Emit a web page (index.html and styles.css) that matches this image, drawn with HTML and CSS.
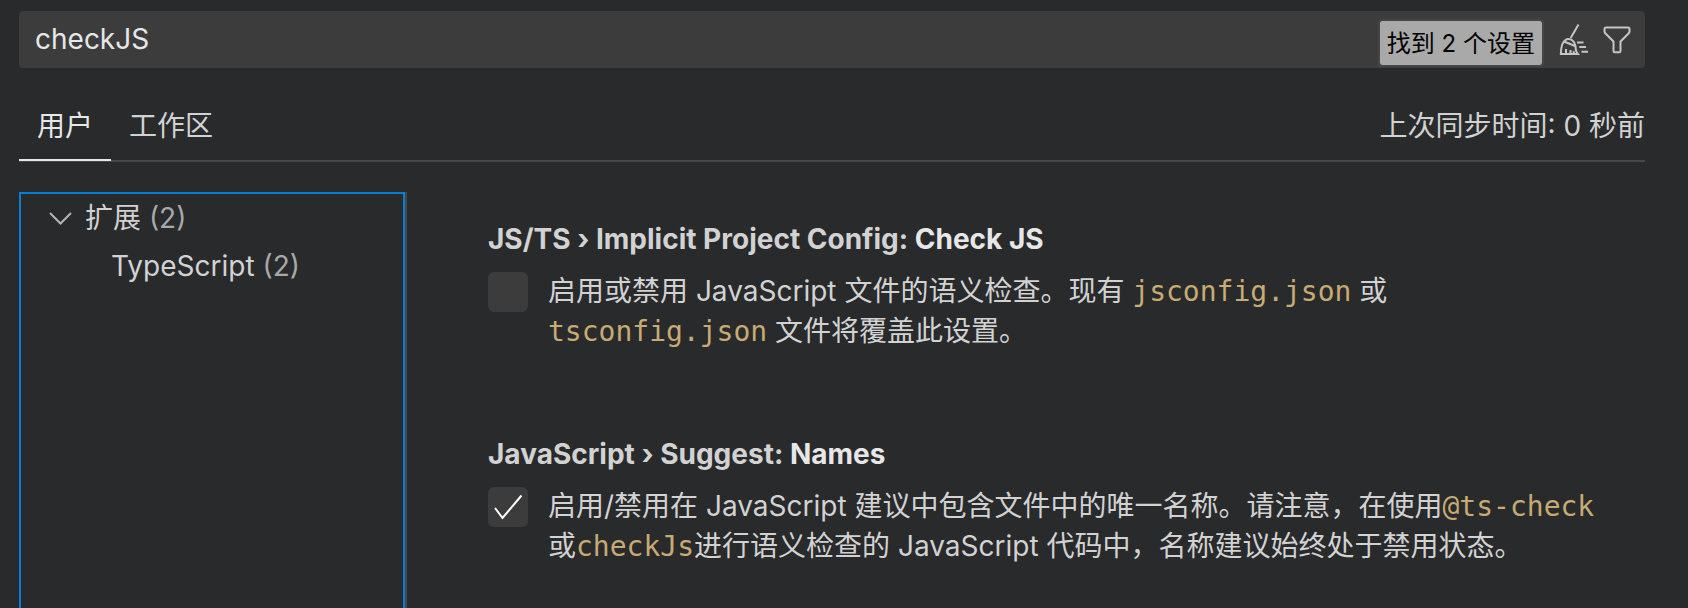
FILE: index.html
```html
<!DOCTYPE html>
<html lang="zh-CN">
<head>
<meta charset="utf-8">
<title>设置</title>
<link rel="stylesheet" href="styles.css">
</head>
<body>
<div class="settings">
  <div class="search">
    <input class="search-input" type="text" value="checkJS" aria-label="搜索设置">
    <span class="badge">找到 2 个设置</span>
    <button class="icon-button" type="button" aria-label="清除">
      <svg width="32" height="32" viewBox="0 0 32 32" fill="none" stroke="currentColor" stroke-width="2">
        <path d="M19.5 .5 11.7 14M1.8 30C2 22 3.500 17 7.500 15.300 12 14 16 17.500 16.500 22 16.500 26 17 28 18.800 30ZM5 17.500 16 22M7 30v-5M11.500 30v-4M15 30l-.5-3M18 18.500h6.500M20.300 23H27M22.500 27.700H29"/>
      </svg>
    </button>
    <button class="icon-button" type="button" aria-label="筛选">
      <svg width="32" height="32" viewBox="0 0 32 32" fill="none" stroke="currentColor" stroke-width="2" stroke-linejoin="round">
        <path d="M4 3.500H26Q27.500 3.500 27.500 5V7.500Q27.500 8.500 26.500 9.500L18.500 17.500V27Q18.500 28.300 17.200 28.300H12.800Q11.500 28.300 11.500 27V17.500L3.500 9.500Q2.500 8.500 2.500 7.500V5Q2.500 3.500 4 3.500Z"/>
      </svg>
    </button>
  </div>

  <div class="tabs">
    <button class="tab tab-active" type="button">用户</button>
    <button class="tab" type="button">工作区</button>
    <span class="sync">上次同步时间: 0 秒前</span>
  </div>

  <div class="body">
    <nav class="toc">
      <div class="toc-row">
        <svg class="chevron" width="24" height="24" viewBox="0 0 24 24" fill="none" stroke="currentColor" stroke-width="2"><path d="M2 7 12.500 17.500 23 7"/></svg>
        <span>扩展 <span class="count">(2)</span></span>
      </div>
      <div class="toc-row toc-child"><span>TypeScript <span class="count">(2)</span></span></div>
    </nav>
    <main class="list">
      <section class="setting">
        <h2 class="title">JS/TS › Implicit Project Config: <span class="name">Check JS</span></h2>
        <div class="row">
          <span class="check">
            <input class="box" type="checkbox" id="check-js">
          </span>
          <label class="desc" for="check-js">启用或禁用 JavaScript 文件的语义检查。现有 <code>jsconfig.json</code> 或 <code>tsconfig.json</code> 文件将覆盖此设置。</label>
        </div>
      </section>
      <section class="setting">
        <h2 class="title">JavaScript › Suggest: <span class="name">Names</span></h2>
        <div class="row">
          <span class="check">
            <input class="box" type="checkbox" id="names" checked>
            <svg class="tick" width="40" height="40" viewBox="0 0 40 40" fill="none" stroke="currentColor" stroke-width="2"><path d="M7 21 14.500 31 33.500 8.500"/></svg>
          </span>
          <label class="desc" for="names">启用/禁用在 JavaScript 建议中包含文件中的唯一名称。请注意，在使用<code>@ts-check</code>或<code>checkJs</code>进行语义检查的 JavaScript 代码中，名称建议始终处于禁用状态。</label>
        </div>
      </section>
    </main>
  </div>
</div>
</body>
</html>
```
FILE: styles.css
```css
* {
  box-sizing: border-box;
}

body {
  margin: 0;
  background: #292a2c;
  color: #d2d2d2;
  font: 28px/40px Inter, "Noto Sans CJK SC", sans-serif;
}

button,
input {
  font: inherit;
  color: inherit;
  margin: 0;
}

.settings {
  display: flex;
  flex-direction: column;
  min-height: 100vh;
  padding: 11px 43px 0 19px;
}

.search {
  display: flex;
  align-items: center;
  height: 57px;
  padding-right: 11px;
  border-radius: 4px;
  background: #3c3c3c;
}

.search-input {
  flex: 1;
  min-width: 0;
  padding: 0 16px 2px;
  border: 0;
  outline: 0;
  background: none;
  color: #e7e7e7;
}

.badge {
  margin: 6px 15px 0 0;
  padding: 5px 7px 3px;
  border: 2px solid #464646;
  border-radius: 4px;
  background: #a9a9a9;
  background-clip: padding-box;
  color: #000;
  font-size: 24px;
  line-height: 36px;
}

.icon-button {
  display: flex;
  margin-right: 11px;
  padding: 0;
  border: 0;
  background: none;
  color: #c5c5c5;
}

.icon-button:last-child {
  margin-right: 0;
}

.tabs {
  display: flex;
  margin-top: 30px;
  border-bottom: 2px solid #464748;
}

.tab {
  height: 63px;
  margin-bottom: -1px;
  padding: 0 18px 6px;
  border: 0;
  border-bottom: 2px solid transparent;
  background: none;
}

.tab-active {
  border-bottom-color: #e7e7e7;
  color: #e7e7e7;
}

.sync {
  margin-left: auto;
  padding-top: 8px;
}

.body {
  display: grid;
  grid-template-columns: 388px 1fr;
  flex: 1;
  margin-top: 30px;
}

.toc {
  border: 2px solid #007fd4;
  border-bottom: 0;
  box-shadow: 2px 0 #464748;
  margin-right: 2px;
}

.toc-row {
  display: flex;
  align-items: center;
  gap: 13px;
  height: 48px;
  padding-left: 27px;
}

.toc-child {
  padding-left: 90px;
}

.chevron {
  color: #b4b4b4;
}

.count {
  color: #a8a8a8;
}

.list {
  padding: 27px 42px 0 81px;
}

.setting {
  min-height: 215px;
}

.setting:last-child {
  min-height: 0;
}

.title {
  margin: 0 0 12px;
  font-size: 28px;
  font-weight: 700;
  line-height: 40px;
}

.name {
  color: #e7e7e7;
}

.row {
  display: flex;
  gap: 20px;
}

.check {
  display: grid;
  flex: none;
  height: 40px;
  margin-top: 1px;
}

.box {
  grid-area: 1 / 1;
  appearance: none;
  width: 40px;
  height: 40px;
  border-radius: 6px;
  background: #3c3c3c;
}

.tick {
  grid-area: 1 / 1;
  color: #fff;
  pointer-events: none;
}

code {
  color: #c6ab73;
  font: 28px "DejaVu Sans Mono", monospace;
  line-height: 1;
  white-space: nowrap;
}
```
